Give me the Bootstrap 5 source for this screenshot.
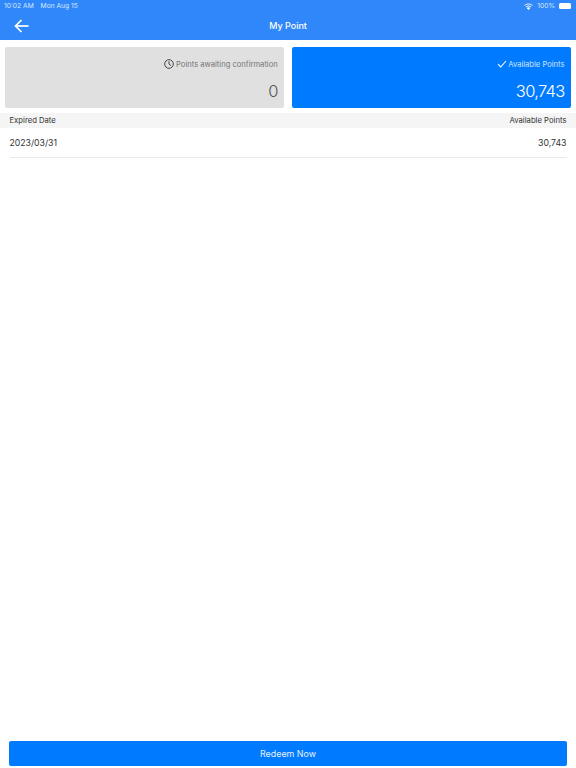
<!DOCTYPE html>
<html lang="en">
<head>
    <meta charset="UTF-8">
    <title>My Point</title>
    <link href="https://cdn.jsdelivr.net/npm/bootstrap@5.3.0/dist/css/bootstrap.min.css" rel="stylesheet">
    <style>
        html, body { height: 100%; }
        body {
            font-family: "Inter", "Liberation Sans", sans-serif;
            color: #333;
            background: #fff;
        }
        .page-wrap { height: 768px; }
        .top-bar { height: 40px; background-color: #2f87f9; color: #fff; }
        .status-row { height: 12px; padding: 0 5px 0 4px; font-size: 6.7px; line-height: 12px; color: #d9e9ff; }
        .status-date { margin-left: 5px; }
        .title-row { height: 28px; }
        .back-btn { left: 14px; top: 6.5px; line-height: 0; }
        .page-title { font-size: 9px; font-weight: 500; line-height: 27px; display: block; }
        .battery { width: 12px; height: 6px; background: #fff; border-radius: 1.5px; }
        .cards-row { padding: 6.5px 5px 0; gap: 7.5px; }
        .point-box { height: 61.5px; border-radius: 2px; padding: 11px 6.5px 0 7px; flex: 1 1 0; }
        .point-wait { background: #e0e0e0; color: #757575; }
        .point-ok { background: #007bff; color: #cfe4ff; }
        .point-label { font-size: 7.6px; line-height: 13px; gap: 2.5px; }
        .point-ok .point-label { gap: 1px; }
        .point-num { font-size: 16.5px; font-weight: 300; letter-spacing: -0.7px; line-height: 20px; margin-top: 10px; color: #555; }
        .point-ok .point-num { color: #fff; }
        .list-head {
            margin-top: 5px;
            height: 15px;
            background: #f5f5f5;
            padding: 0 9.5px;
            font-size: 7.7px;
            line-height: 15px;
        }
        .list-line {
            margin: 0 9.5px;
            height: 29.5px;
            line-height: 30.5px;
            font-size: 8.7px;
            border-bottom: 1px solid #e9e9e9;
        }
        .redeem-btn {
            margin: 0 9px 2px;
            height: 25px;
            line-height: 25px;
            padding: 0;
            border: 0;
            border-radius: 2px;
            font-size: 8.9px;
            color: #e6f1ff;
            background: #007bff;
        }
    </style>
</head>
<body>
    <div class="page-wrap d-flex flex-column">
        <!-- Top bar -->
        <div class="top-bar">
            <div class="status-row d-flex justify-content-between">
                <div>10:02 AM <span class="status-date">Mon Aug 15</span></div>
                <div class="d-flex align-items-center gap-1">
                    <svg width="9" height="7" viewBox="0 0 18 14" fill="none" stroke="#fff" stroke-width="2" aria-hidden="true">
                        <path d="M1 5c4.500-4 11.500-4 16 0"/>
                        <path d="M4 8c2.800-2.500 7.200-2.500 10 0"/>
                        <path d="M9 13l2.500-2.700c-1.500-1-3.500-1-5 0z" fill="#fff"/>
                    </svg>
                    <span>100%</span>
                    <span class="battery"></span>
                </div>
            </div>
            <div class="title-row position-relative text-center">
                <div class="back-btn position-absolute">
                    <svg width="15" height="14" viewBox="0 0 15 14" fill="none" stroke="#fff" stroke-width="1.700" aria-hidden="true">
                        <path d="M14.500 7H1.500"/>
                        <path d="M7.500 1L1.500 7l6 6"/>
                    </svg>
                </div>
                <span class="page-title">My Point</span>
            </div>
        </div>

        <!-- Point boxes -->
        <div class="cards-row d-flex">
            <div class="point-box point-wait text-end">
                <div class="point-label d-flex justify-content-end align-items-center">
                    <svg width="10" height="10" viewBox="0 0 10 10" fill="none" stroke="#444" stroke-width="1" aria-hidden="true">
                        <circle cx="5" cy="5" r="4.300"/>
                        <path d="M5 2.300V5l1.900 1.500"/>
                    </svg>
                    <span>Points awaiting confirmation</span>
                </div>
                <div class="point-num">0</div>
            </div>
            <div class="point-box point-ok text-end">
                <div class="point-label d-flex justify-content-end align-items-center">
                    <svg width="10" height="8" viewBox="0 0 10 8" fill="none" stroke="#fff" stroke-width="1.100" aria-hidden="true">
                        <path d="M1 4.200l2.700 2.800L9 1"/>
                    </svg>
                    <span>Available Points</span>
                </div>
                <div class="point-num">30,743</div>
            </div>
        </div>

        <!-- List -->
        <div class="list-head d-flex justify-content-between">
            <span>Expired Date</span>
            <span>Available Points</span>
        </div>
        <div class="list-line d-flex justify-content-between">
            <span>2023/03/31</span>
            <span>30,743</span>
        </div>

        <button type="button" class="btn redeem-btn mt-auto">Redeem Now</button>
    </div>

    <script src="https://cdn.jsdelivr.net/npm/bootstrap@5.3.0/dist/js/bootstrap.bundle.min.js"></script>
</body>
</html>
